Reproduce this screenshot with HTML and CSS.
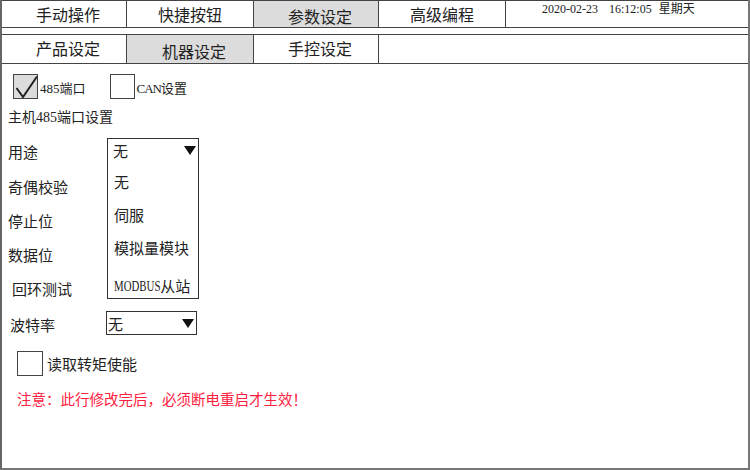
FILE: index.html
```html
<!DOCTYPE html>
<html lang="zh-CN">
<head>
<meta charset="utf-8">
<title>参数设定</title>
<link rel="stylesheet" href="styles.css">
</head>
<body>
<div class="screen">
  <div class="tabrow top">
    <div class="tab w1 shift">手动操作</div>
    <div class="tab w2">快捷按钮</div>
    <div class="tab w1 shift active">参数设定</div>
    <div class="tab w2">高级编程</div>
    <div class="datetime"><span>2020-02-23</span><span class="time">16:12:05</span><span class="week">星期天</span></div>
  </div>
  <div class="tabrow sub">
    <div class="tab w1 shift">产品设定</div>
    <div class="tab w2 shift active">机器设定</div>
    <div class="tab w1 shift">手控设定</div>
    <div class="tab rest"></div>
  </div>
  <div class="content">
    <div class="checks">
      <span class="box checked">
        <svg width="24" height="24" viewBox="0 0 24 24"><polyline points="2.5,13 9,22 23,1.5" fill="none" stroke="#222" stroke-width="2"/></svg>
      </span>
      <span class="small">485端口</span>
      <span class="box second"></span>
      <span class="small"><span class="narrowlat">CAN</span>设置</span>
    </div>
    <div class="title">主机485端口设置</div>
    <div class="field first">
      <span class="label">用途</span>
      <div class="select">
        <span>无</span>
        <svg class="arrow" width="12" height="9" viewBox="0 0 12 9"><polygon points="0,0 12,0 6,9" fill="#111"/></svg>
        <div class="list">
          <div class="item">无</div>
          <div class="item">伺服</div>
          <div class="item">模拟量模块</div>
          <div class="item last"><span class="modbus">MODBUS</span>从站</div>
        </div>
      </div>
    </div>
    <div class="rows">
      <div class="row">奇偶校验</div>
      <div class="row">停止位</div>
      <div class="row">数据位</div>
      <div class="row in4">回环测试</div>
    </div>
    <div class="field baud">
      <span class="label in2">波特率</span>
      <div class="select narrow">
        <span>无</span>
        <svg class="arrow" width="12" height="9" viewBox="0 0 12 9"><polygon points="0,0 12,0 6,9" fill="#111"/></svg>
      </div>
    </div>
    <div class="torque">
      <span class="box big"></span>
      <span class="label">读取转矩使能</span>
    </div>
    <div class="warn">注意：此行修改完后，必须断电重启才生效！</div>
  </div>
</div>
</body>
</html>
```

FILE: styles.css
```css
html, body {
  margin: 0;
  padding: 0;
  background: #fff;
}
body {
  font-family: "Liberation Serif", "Noto Sans CJK SC", serif;
  color: #222;
}
.screen {
  width: 750px;
  height: 470px;
  box-sizing: border-box;
  border-left: 2px solid #666;
  border-right: 2px solid #777;
  border-bottom: 2px solid #777;
  display: flex;
  flex-direction: column;
}
.tabrow {
  display: flex;
  box-sizing: border-box;
  border-top: 1px solid #444;
  border-bottom: 1px solid #444;
}
.tabrow.top {
  height: 28px;
}
.tabrow.sub {
  height: 30px;
  margin-top: 6px;
}
.tab {
  box-sizing: border-box;
  border-right: 1px solid #444;
  display: flex;
  align-items: center;
  justify-content: center;
  font-family: "Noto Sans CJK SC", sans-serif;
  font-size: 16px;
  color: #222;
  line-height: 1;
}
.tab.w1 { width: 125px; }
.tab.w2 { width: 127px; }
.tab.shift { padding-left: 8px; }
.tab.active {
  background: #dcdcdc;
  padding-top: 4px;
}
.tabrow.sub .tab { padding-bottom: 3px; }
.tabrow.sub .tab.active { padding-bottom: 0; padding-top: 4px; }
.tab.rest {
  flex: 1;
  border-right: none;
}
.datetime {
  flex: 1;
  padding-left: 36px;
  padding-top: 1px;
  font-size: 12px;
  line-height: 14px;
  color: #222;
}
.datetime .time { margin-left: 11px; }
.datetime .week {
  margin-left: 7px;
  font-size: 12px;
}
.content {
  flex: 1;
  padding-left: 6px;
  display: flex;
  flex-direction: column;
  align-items: flex-start;
}
.checks {
  margin-top: 10px;
  display: flex;
  align-items: center;
  padding-left: 5px;
  height: 25px;
}
.box {
  box-sizing: border-box;
  width: 25px;
  height: 25px;
  border: 1px solid #444;
  background: #fff;
  display: block;
}
.box.checked {
  background: #dcdcdc;
}
.box.checked svg {
  display: block;
}
.box.second { margin-left: 24px; }
.small {
  font-size: 13px;
  margin-left: 2px;
  padding-top: 2px;
}
.narrowlat { letter-spacing: -1px; }
.title {
  margin-top: 9px;
  font-size: 14px;
  line-height: 20px;
}
.field {
  display: grid;
  grid-template-columns: 99px 92px;
  align-items: center;
  height: 24px;
}
.field.first { margin-top: 10px; }
.field.baud {
  margin-top: 6px;
  grid-template-columns: 98px 91px;
}
.label {
  font-size: 15px;
  padding-top: 3px;
}
.in2 { padding-left: 2px; }
.in4 { padding-left: 4px; }
.select {
  position: relative;
  box-sizing: border-box;
  height: 24px;
  border: 1px solid #333;
  background: #fff;
  display: flex;
  align-items: center;
  justify-content: space-between;
  padding-left: 5px;
  padding-right: 2px;
  font-size: 15px;
}
.select.narrow { padding-left: 1px; }
.arrow { display: block; }
.list {
  position: absolute;
  left: -1px;
  top: 22px;
  width: 92px;
  height: 138px;
  box-sizing: border-box;
  border: 1px solid #333;
  border-top: none;
  background: #fff;
  padding-top: 4px;
  z-index: 2;
}
.item {
  height: 33px;
  display: flex;
  align-items: center;
  padding-left: 6px;
  font-size: 15px;
  white-space: nowrap;
}
.item.last { padding-top: 5px; }
.modbus {
  display: inline-block;
  font-size: 15.5px;
  transform: scaleX(0.7);
  transform-origin: left center;
  margin-right: -20px;
}
.rows {
  margin-top: 7px;
  display: flex;
  flex-direction: column;
}
.row {
  height: 34px;
  display: flex;
  align-items: center;
  font-size: 15px;
}
.torque {
  margin-top: 16px;
  margin-left: 9px;
  display: flex;
  align-items: center;
}
.box.big {
  width: 26px;
  height: 25px;
}
.torque .label {
  margin-left: 4px;
  padding-top: 0;
}
.warn {
  margin-top: 14px;
  margin-left: 9px;
  font-size: 14.5px;
  line-height: 20px;
  color: #ff2040;
}
```
